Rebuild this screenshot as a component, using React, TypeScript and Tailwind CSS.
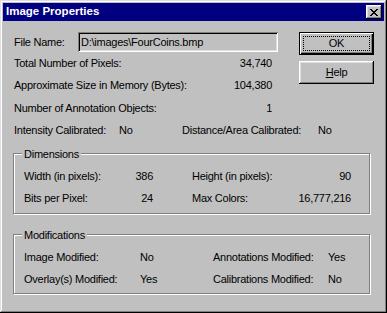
import type { ReactNode } from "react";

const raised =
  "shadow-[inset_-1px_-1px_#000,inset_1px_1px_#fff,inset_-2px_-2px_#808080,inset_2px_2px_#dfdfdf]";

function CloseGlyph() {
  // 8x7 pixel "x" like the classic caption button
  const rows = ["11000011", "01100110", "00111100", "00011000", "00111100", "01100110", "11000011"];
  return (
    <svg width="8" height="7" viewBox="0 0 8 7" shapeRendering="crispEdges">
      {rows.flatMap((row, y) =>
        row.split("").map((c, x) =>
          c === "1" ? <rect key={`${x}-${y}`} x={x} y={y} width="1" height="1" fill="#000" /> : null
        )
      )}
    </svg>
  );
}

function GroupBox({ title, children, className }: { title: string; children: ReactNode; className?: string }) {
  return (
    <div
      className={`relative w-[357px] border border-[#808080] shadow-[1px_1px_0_#fff,inset_1px_1px_0_#fff] pl-[10px] ${className ?? ""}`}
    >
      <span className="absolute -top-[7px] left-[8px] bg-[#c0c0c0] px-[2px] leading-[14px]">{title}</span>
      {children}
    </div>
  );
}

function InfoRow({ label, value, h }: { label: string; value: string; h: string }) {
  return (
    <div className={`flex items-center justify-between pr-[6px] ${h}`}>
      <span>{label}</span>
      <span>{value}</span>
    </div>
  );
}

export default function App() {
  return (
    <div className="flex h-[313px] w-[387px] flex-col bg-[#c0c0c0] p-[3px] font-['Liberation_Sans',Arial,sans-serif] text-[11px] tracking-[-0.25px] text-black shadow-[inset_-1px_-1px_#000,inset_1px_1px_#dfdfdf,inset_-2px_-2px_#808080,inset_2px_2px_#fff]">
      <div className="flex h-[18px] shrink-0 items-center justify-between bg-[#000080] pl-[3px] pr-[2px]">
        <span className="text-[11.5px] font-bold tracking-normal text-white">Image Properties</span>
        <button className={`flex h-[14px] w-[16px] items-center justify-center bg-[#c0c0c0] ${raised}`}>
          <CloseGlyph />
        </button>
      </div>

      <div className="flex flex-col pl-[10px]">
        <div className="mt-[11px] flex">
          <div className="ml-[1px] flex w-[264px] flex-col">
            <div className="flex h-[20px] items-center">
              <span className="w-[64px]">File Name:</span>
              <div className="flex h-[20px] w-[200px] items-center pl-[3px] shadow-[inset_1px_1px_#808080,inset_-1px_-1px_#fff,inset_2px_2px_#000,inset_-2px_-2px_#dfdfdf]">
                {"D:\\images\\FourCoins.bmp"}
              </div>
            </div>
            <InfoRow label="Total Number of Pixels:" value="34,740" h="h-[22px]" />
            <InfoRow label="Approximate Size in Memory (Bytes):" value="104,380" h="h-[23px]" />
            <InfoRow label="Number of Annotation Objects:" value="1" h="h-[22px]" />
          </div>
          <div className="ml-[21px] flex flex-col gap-[6px]">
            <button className={`h-[23px] w-[75px] border border-black bg-[#c0c0c0] p-[3px] shadow-[inset_1px_1px_#fff,inset_-1px_-1px_#000,inset_-2px_-2px_#808080]`}>
              <div className="flex h-full w-full items-center justify-center border border-dotted border-black">OK</div>
            </button>
            <button className={`flex h-[23px] w-[75px] items-center justify-center bg-[#c0c0c0] ${raised}`}>
              <span>
                <span className="underline">H</span>elp
              </span>
            </button>
          </div>
        </div>

        <div className="ml-[1px] flex h-[23px] items-center">
          <span className="w-[105px]">Intensity Calibrated:</span>
          <span className="w-[63px]">No</span>
          <span className="w-[136px]">Distance/Area Calibrated:</span>
          <span>No</span>
        </div>

        <GroupBox title="Dimensions" className="mt-[11px] pt-[11px] pb-[3px]">
          <div className="flex h-[22px] items-center">
            <div className="flex w-[129px] justify-between">
              <span>Width (in pixels):</span>
              <span>386</span>
            </div>
            <div className="ml-[39px] flex w-[159px] justify-between">
              <span>Height (in pixels):</span>
              <span>90</span>
            </div>
          </div>
          <div className="flex h-[23px] items-center">
            <div className="flex w-[129px] justify-between">
              <span>Bits per Pixel:</span>
              <span>24</span>
            </div>
            <div className="ml-[39px] flex w-[159px] justify-between">
              <span>Max Colors:</span>
              <span>16,777,216</span>
            </div>
          </div>
        </GroupBox>

        <GroupBox title="Modifications" className="mt-[20px] pt-[11px] pb-[3px]">
          <div className="flex h-[22px] items-center">
            <span className="w-[116px]">Image Modified:</span>
            <span className="w-[73px]">No</span>
            <span className="w-[115px]">Annotations Modified:</span>
            <span>Yes</span>
          </div>
          <div className="flex h-[22px] items-center">
            <span className="w-[116px]">Overlay(s) Modified:</span>
            <span className="w-[73px]">Yes</span>
            <span className="w-[115px]">Calibrations Modified:</span>
            <span>No</span>
          </div>
        </GroupBox>
      </div>
    </div>
  );
}
